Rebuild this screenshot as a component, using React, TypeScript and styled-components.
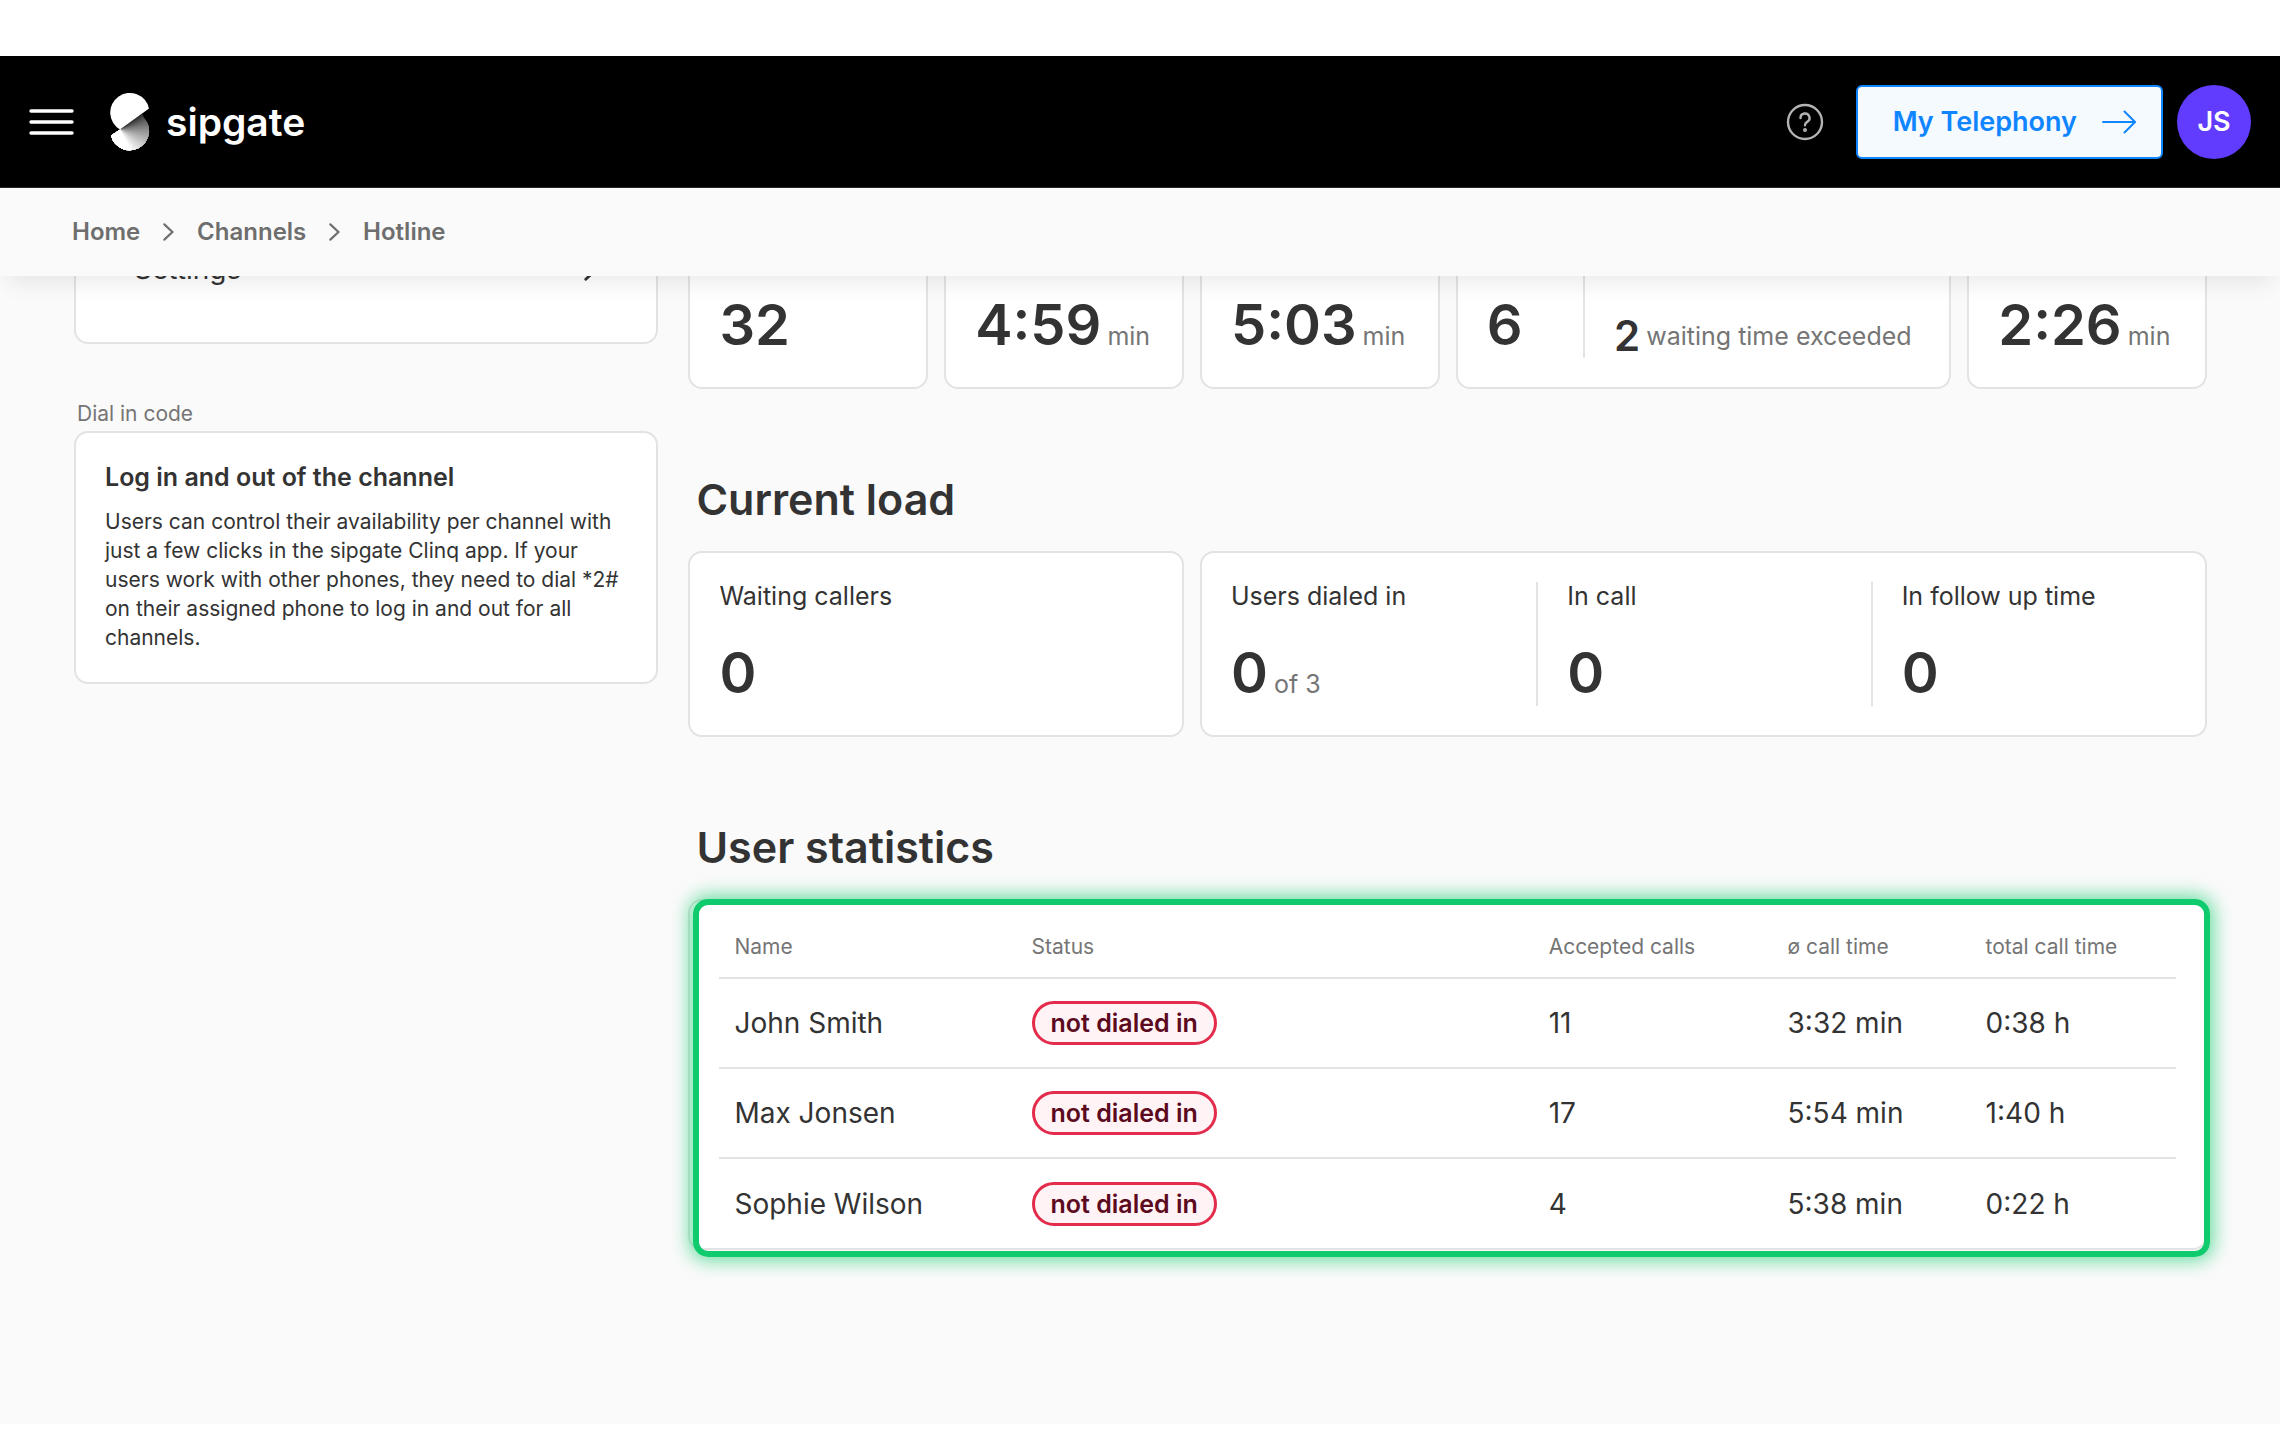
import React from "react";
import styled, { createGlobalStyle } from "styled-components";

const GlobalStyle = createGlobalStyle`
  *, *::before, *::after { box-sizing: border-box; }
  html { height: 100%; }
  body {
    margin: 0;
    min-height: 100%;
    background: #fff;
    color: #333;
    font-family: Inter, "Liberation Sans", sans-serif;
    font-size: 24px;
    line-height: 32px;
  }
  #root { min-height: 100vh; display: flex; flex-direction: column; }
  h1, h2, h3, p { margin: 0; }
  a { color: inherit; text-decoration: none; }
`;

const Page = styled.div`
  flex: 1;
  display: flex;
  flex-direction: column;
  margin: 56px 0 12px;
  background: #fafafa;
`;

const Header = styled.header`
  position: relative;
  z-index: 2;
  display: flex;
  align-items: center;
  justify-content: space-between;
  height: 132px;
  padding: 0 29px;
  background: #000;
  border-bottom: 1px solid #262626;
`;

const HeaderGroup = styled.div<{ $gap: number }>`
  display: flex;
  align-items: center;
  gap: ${(p) => p.$gap}px;
`;

const IconButton = styled.button`
  display: grid;
  place-items: center;
  padding: 0;
  border: 0;
  background: none;
  color: inherit;
  cursor: pointer;
`;

const Brand = styled.a`
  display: flex;
  align-items: center;
  gap: 16px;
  color: #fff;
  font-size: 39px;
  font-weight: 600;
  line-height: 48px;
`;

const HelpButton = styled(IconButton)`
  color: #b3b3b3;
  margin-right: 18px;
`;

const TelephonyButton = styled.button`
  display: flex;
  align-items: center;
  gap: 25px;
  height: 74px;
  padding: 0 25px 0 35px;
  border: 2px solid #0f85ff;
  border-radius: 6px;
  background: #f5faff;
  color: #0f85ff;
  font: 600 27px/32px Inter, "Liberation Sans", sans-serif;
  cursor: pointer;
`;

const Avatar = styled.button`
  width: 74px;
  height: 74px;
  padding: 0;
  border: 0;
  border-radius: 50%;
  background: #613cff;
  color: #fff;
  font: 600 27px/32px Inter, "Liberation Sans", sans-serif;
  cursor: pointer;
`;

const BreadcrumbBar = styled.nav`
  position: relative;
  z-index: 1;
  display: flex;
  align-items: center;
  gap: 23px;
  height: 88px;
  padding: 0 72px;
  background: #fafafa;
  color: #6e6e6e;
  font-weight: 600;
  box-shadow: 0 14px 22px -8px rgba(0, 0, 0, 0.09);
`;

/* The page is scrolled: its top slides under the breadcrumb bar. */
const Main = styled.main`
  display: grid;
  grid-template-columns: 27.4% minmax(0, 1fr);
  align-items: start;
  gap: 30px;
  margin-top: -73px;
  padding: 0 73px 100px 74px;
`;

const Card = styled.section`
  border: 2px solid #e3e3e3;
  border-radius: 14px;
  background: #fff;
`;

const Sidebar = styled.aside`
  display: flex;
  flex-direction: column;
`;

const NavCard = styled(Card)`
  height: 141px;
  padding: 48px 58px 0;
`;

const NavLink = styled.a`
  display: flex;
  align-items: center;
  justify-content: space-between;
  font-size: 28px;
  line-height: 32px;
`;

const SideLabel = styled.p`
  margin: 55px 0 3px 3px;
  color: #757575;
  font-size: 21px;
  line-height: 29px;
`;

const InfoCard = styled(Card)`
  padding: 28px 29px 30px;
`;

const InfoTitle = styled.h3`
  margin-bottom: 14px;
  font-size: 25px;
  font-weight: 600;
  line-height: 32px;
`;

const InfoText = styled.p`
  font-size: 21px;
  line-height: 29px;
`;

const Content = styled.div`
  display: flex;
  flex-direction: column;
`;

const StatGrid = styled.div`
  display: grid;
  grid-template-columns: repeat(6, minmax(0, 1fr));
  gap: 16px;
`;

const StatCard = styled(Card)<{ $span?: number; $columns?: string }>`
  grid-column: span ${(p) => p.$span ?? 1};
  display: grid;
  grid-template-columns: ${(p) => p.$columns ?? "minmax(0, 1fr)"};
  height: 186px;
  padding: 29px 0;
`;

const Stat = styled.div`
  display: flex;
  flex-direction: column;
  padding-left: 29px;

  & + & { border-left: 2px solid #e3e3e3; }
`;

const StatLabel = styled.span`
  font-size: 25px;
  line-height: 28px;
`;

const StatValue = styled.p<{ $small?: boolean }>`
  display: flex;
  align-items: ${(p) => (p.$small ? "center" : "baseline")};
  gap: 6px;
  margin-top: auto;
  font-size: 25px;
  white-space: nowrap;
`;

const Figure = styled.strong<{ $small?: boolean }>`
  font-size: ${(p) => (p.$small ? 42 : 56)}px;
  font-weight: 600;
  line-height: ${(p) => (p.$small ? 44 : 66)}px;
`;

const Unit = styled.span`
  color: #757575;
`;

const SectionTitle = styled.h2`
  margin: 82px 0 24px 8px;
  font-size: 43px;
  font-weight: 600;
  line-height: 56px;
`;

const TableCard = styled(Card)`
  position: relative;
  padding: 0 29px;
`;

const Highlight = styled.div`
  position: absolute;
  inset: -2px -5px -9px 3px;
  border: 6px solid #0fcb6d;
  border-radius: 15px;
  box-shadow: 0 0 18px 4px rgba(15, 203, 109, 0.6);
  pointer-events: none;
`;

const Table = styled.table`
  width: 100%;
  table-layout: fixed;
  border-collapse: collapse;
  text-align: left;
`;

const HeadCell = styled.th<{ $width: number }>`
  width: ${(p) => p.$width}%;
  height: 77px;
  padding: 16px 15px 0;
  color: #757575;
  font-size: 21px;
  font-weight: 400;
`;

const Row = styled.tr`
  border-top: 2px solid #e3e3e3;
`;

const Cell = styled.td`
  height: 90px;
  padding: 0 15px;
  font-size: 28px;
`;

const Pill = styled.span`
  display: inline-block;
  padding: 5px 16px;
  border: 3px solid #e32b4b;
  border-radius: 22px;
  background: #fff3f5;
  color: #5c0a20;
  font-size: 25px;
  font-weight: 600;
  line-height: 28px;
  vertical-align: middle;
`;

const MenuIcon = () => (
  <svg width="45" height="26" viewBox="0 0 45 26" stroke="#fff" strokeWidth="3.4" strokeLinecap="round" aria-hidden="true">
    <path d="M2 2h41M2 13h41M2 24h41" />
  </svg>
);

/* Shades of the logo's folded half, fanned clockwise around the fold point. */
const foldSteps = Array.from({ length: 26 }, (_, i) => {
  const angle = -38 + i * 4;
  const shade = Math.min(255, Math.round(30 + 225 * Math.pow(i / 25, 0.7)));
  const end = [150, 110, 60, 20].filter((a) => a > angle);
  const point = (a: number) =>
    `${10 + 90 * Math.cos((a * Math.PI) / 180)} ${37.5 + 90 * Math.sin((a * Math.PI) / 180)}`;
  return { d: `M10 37.5L${[...end, angle].map(point).join("L")}Z`, fill: `rgb(${shade},${shade},${shade})` };
});

const Logo = () => (
  <svg width="40" height="60" viewBox="0 0 40 60" aria-hidden="true">
    <defs>
      <clipPath id="fold">
        <path d="M10 37.5L32 21.500L34 26A19.300 19.300 0 1 1 1 43.500Z" />
      </clipPath>
    </defs>
    <g clipPath="url(#fold)">
      {foldSteps.map((s) => <path key={s.fill} d={s.d} fill={s.fill} />)}
    </g>
    <path d="M10 37.500A19.600 19.600 0 1 1 39 16.500Z" fill="#fff" />
  </svg>
);

const HelpIcon = () => (
  <svg width="38" height="38" viewBox="0 0 38 38" fill="none" stroke="currentColor" strokeWidth="2.4" strokeLinecap="round" aria-hidden="true">
    <circle cx="19" cy="19" r="17" />
    <path d="M14.500 15a4.500 4.500 0 1 1 6.700 3.900c-1.500.9-2.200 1.500-2.200 3.400" />
    <circle cx="19" cy="27" r="0.8" fill="currentColor" />
  </svg>
);

const ArrowIcon = () => (
  <svg width="34" height="24" viewBox="0 0 34 24" fill="none" stroke="currentColor" strokeWidth="2" strokeLinecap="round" aria-hidden="true">
    <path d="M1 12h31.500M22.500 1.500L33 12L22.500 22.500" />
  </svg>
);

const Chevron = ({ size = 18 }: { size?: number }) => (
  <svg width={size * 0.6} height={size} viewBox="0 0 12 20" fill="none" stroke="currentColor" strokeWidth="2.4" strokeLinecap="round" aria-hidden="true">
    <path d="M1.500 1.500L10.500 10L1.500 18.500" />
  </svg>
);

const columns = [
  { title: "Name", width: 20.4 },
  { title: "Status", width: 35.5 },
  { title: "Accepted calls", width: 16.4 },
  { title: "ø call time", width: 13.6 },
  { title: "total call time", width: 14.1 },
];

const users = [
  { name: "John Smith", status: "not dialed in", accepted: 11, average: "3:32 min", total: "0:38 h" },
  { name: "Max Jonsen", status: "not dialed in", accepted: 17, average: "5:54 min", total: "1:40 h" },
  { name: "Sophie Wilson", status: "not dialed in", accepted: 4, average: "5:38 min", total: "0:22 h" },
];

type StatItemProps = { label?: string; value: string; unit?: string; small?: boolean };

const StatItem = ({ label, value, unit, small }: StatItemProps) => (
  <Stat>
    {label && <StatLabel>{label}</StatLabel>}
    <StatValue $small={small}>
      <Figure $small={small}>{value}</Figure>
      {unit && <Unit>{unit}</Unit>}
    </StatValue>
  </Stat>
);

export default function App() {
  return (
    <>
      <GlobalStyle />
      <Page>
        <Header>
          <HeaderGroup $gap={36}>
            <IconButton aria-label="Menu"><MenuIcon /></IconButton>
            <Brand href="#"><Logo />sipgate</Brand>
          </HeaderGroup>
          <HeaderGroup $gap={14}>
            <HelpButton aria-label="Help"><HelpIcon /></HelpButton>
            <TelephonyButton>My Telephony<ArrowIcon /></TelephonyButton>
            <Avatar aria-label="Account">JS</Avatar>
          </HeaderGroup>
        </Header>
        <BreadcrumbBar aria-label="Breadcrumb">
          <a href="#home">Home</a>
          <Chevron />
          <a href="#channels">Channels</a>
          <Chevron />
          <a href="#hotline">Hotline</a>
        </BreadcrumbBar>
        <Main>
          <Sidebar>
            <NavCard>
              <NavLink href="#settings">Settings<Chevron size={24} /></NavLink>
            </NavCard>
            <SideLabel>Dial in code</SideLabel>
            <InfoCard>
              <InfoTitle>Log in and out of the channel</InfoTitle>
              <InfoText>
                Users can control their availability per channel with just a few clicks in the sipgate Clinq app. If
                your users work with other phones, they need to dial *2# on their assigned phone to log in and out for
                all channels.
              </InfoText>
            </InfoCard>
          </Sidebar>
          <Content>
            <StatGrid>
              <StatCard><StatItem value="32" /></StatCard>
              <StatCard><StatItem value="4:59" unit="min" /></StatCard>
              <StatCard><StatItem value="5:03" unit="min" /></StatCard>
              <StatCard $span={2} $columns="25.5% minmax(0, 1fr)">
                <StatItem value="6" />
                <StatItem value="2" unit="waiting time exceeded" small />
              </StatCard>
              <StatCard><StatItem value="2:26" unit="min" /></StatCard>
            </StatGrid>
            <SectionTitle>Current load</SectionTitle>
            <StatGrid>
              <StatCard $span={2}><StatItem label="Waiting callers" value="0" /></StatCard>
              <StatCard $span={4} $columns="repeat(3, minmax(0, 1fr))">
                <StatItem label="Users dialed in" value="0" unit="of 3" />
                <StatItem label="In call" value="0" />
                <StatItem label="In follow up time" value="0" />
              </StatCard>
            </StatGrid>
            <SectionTitle>User statistics</SectionTitle>
            <TableCard>
              <Table>
                <thead>
                  <tr>
                    {columns.map((c) => <HeadCell key={c.title} scope="col" $width={c.width}>{c.title}</HeadCell>)}
                  </tr>
                </thead>
                <tbody>
                  {users.map((u) => (
                    <Row key={u.name}>
                      <Cell>{u.name}</Cell>
                      <Cell><Pill>{u.status}</Pill></Cell>
                      <Cell>{u.accepted}</Cell>
                      <Cell>{u.average}</Cell>
                      <Cell>{u.total}</Cell>
                    </Row>
                  ))}
                </tbody>
              </Table>
              <Highlight />
            </TableCard>
          </Content>
        </Main>
      </Page>
    </>
  );
}
